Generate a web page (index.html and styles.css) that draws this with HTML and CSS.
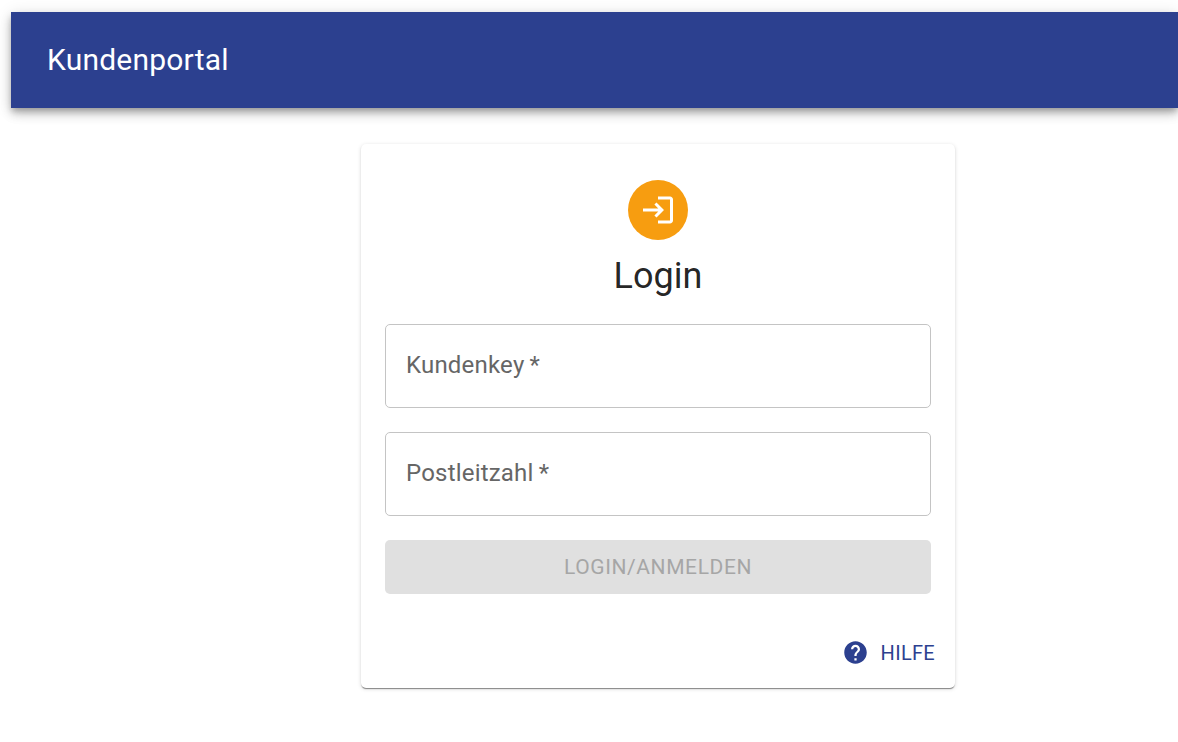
FILE: index.html
```html
<!DOCTYPE html>
<html lang="de">
<head>
  <meta charset="UTF-8" />
  <meta name="viewport" content="width=device-width, initial-scale=1" />
  <title>Kundenportal</title>
  <link rel="stylesheet" href="styles.css">
</head>
<body>
  <div class="page">
    <!-- App bar -->
    <header class="appbar">
      <div class="appbar-title">Kundenportal</div>
    </header>

    <!-- Login card -->
    <main class="content">
      <div class="card">
        <div class="avatar">
          <svg class="avatar-icon" viewBox="0 0 24 24" aria-hidden="true">
            <path d="M11 7 9.6 8.4l2.6 2.6H2v2h10.2l-2.6 2.6L11 17l5-5-5-5zm9 12h-8v2h8c1.1 0 2-.9 2-2V5c0-1.1-.9-2-2-2h-8v2h8v14z"></path>
          </svg>
        </div>
        <h1 class="card-title">Login</h1>

        <form class="login-form">
          <label class="field">
            <input class="field-input" type="text" placeholder="Kundenkey&#8201;*">
          </label>
          <label class="field">
            <input class="field-input" type="text" placeholder="Postleitzahl&#8201;*">
          </label>
          <button class="submit" type="button" disabled>Login/Anmelden</button>
        </form>

        <div class="card-footer">
          <button class="help" type="button">
            <svg class="help-icon" viewBox="0 0 24 24" aria-hidden="true">
              <path d="M12 2C6.48 2 2 6.48 2 12s4.48 10 10 10 10-4.48 10-10S17.52 2 12 2zm1 17h-2v-2h2v2zm2.07-7.75-.9.92C13.45 12.9 13 13.5 13 15h-2v-.5c0-1.1.45-2.1 1.17-2.83l1.24-1.26c.37-.36.59-.86.59-1.41 0-1.1-.9-2-2-2s-2 .9-2 2H8c0-2.21 1.79-4 4-4s4 1.79 4 4c0 .88-.36 1.68-.93 2.25z"></path>
            </svg>
            <span>Hilfe</span>
          </button>
        </div>
      </div>
    </main>
  </div>
</body>
</html>
```

FILE: styles.css
```css
* {
  box-sizing: border-box;
  font-family: Roboto, sans-serif;
}

body {
  margin: 0;
  background: #fff;
  overflow: hidden;
  height: 742px;
}

.page {
  padding: 12px 0 0 11px;
}

.appbar {
  display: flex;
  align-items: center;
  height: 96px;
  padding: 0 36px;
  background-color: #2c408f;
  color: #fff;
  box-shadow: 0 4px 6px -1px rgba(0,0,0,0.24), 0 6px 10px 0 rgba(0,0,0,0.16), 0 2px 16px 0 rgba(0,0,0,0.12);
}

.appbar-title {
  font-size: 30px;
  font-weight: 400;
  letter-spacing: 0.2px;
  line-height: 1.6;
}

.content {
  display: flex;
  justify-content: center;
  padding: 36px 0 0 127px;
}

.card {
  display: flex;
  flex-direction: column;
  align-items: center;
  width: 594px;
  height: 544px;
  padding: 36px 24px 0;
  background: #fff;
  border-radius: 5px;
  box-shadow: 0 2px 1px -1px rgba(0,0,0,0.3), 0 1px 1px 0 rgba(0,0,0,0.18), 0 1px 4px 0 rgba(0,0,0,0.14);
}

.avatar {
  display: flex;
  align-items: center;
  justify-content: center;
  width: 60px;
  height: 60px;
  border-radius: 50%;
  background-color: #f79d10;
}

.avatar-icon {
  width: 36px;
  height: 36px;
  fill: #fff;
}

.card-title {
  margin: 12px 0 0;
  font-size: 36px;
  font-weight: 400;
  line-height: 48px;
  color: rgba(0,0,0,0.87);
}

.login-form {
  display: flex;
  flex-direction: column;
  gap: 24px;
  width: 100%;
  margin-top: 24px;
}

.field {
  display: block;
}

.field-input {
  display: block;
  width: 100%;
  height: 84px;
  padding: 0 20px 2px;
  border: 1px solid #c4c4c4;
  border-radius: 5px;
  background: transparent;
  font-size: 24px;
  letter-spacing: 0.2px;
  outline: none;
}

.field-input::placeholder {
  color: #666;
  opacity: 1;
}

.submit {
  height: 54px;
  border: none;
  border-radius: 5px;
  background-color: #e0e0e0;
  color: #a6a6a6;
  font-size: 21px;
  font-weight: 400;
  letter-spacing: 0.6px;
  text-transform: uppercase;
}

.card-footer {
  display: flex;
  justify-content: flex-end;
  width: 100%;
  margin-top: 45px;
}

.help {
  display: flex;
  align-items: center;
  gap: 12px;
  margin-right: -4px;
  padding: 0;
  border: none;
  background: none;
  color: #2c408f;
  font-size: 20px;
  letter-spacing: 0.3px;
  text-transform: uppercase;
}

.help-icon {
  width: 27px;
  height: 27px;
  fill: #2c408f;
}
```
